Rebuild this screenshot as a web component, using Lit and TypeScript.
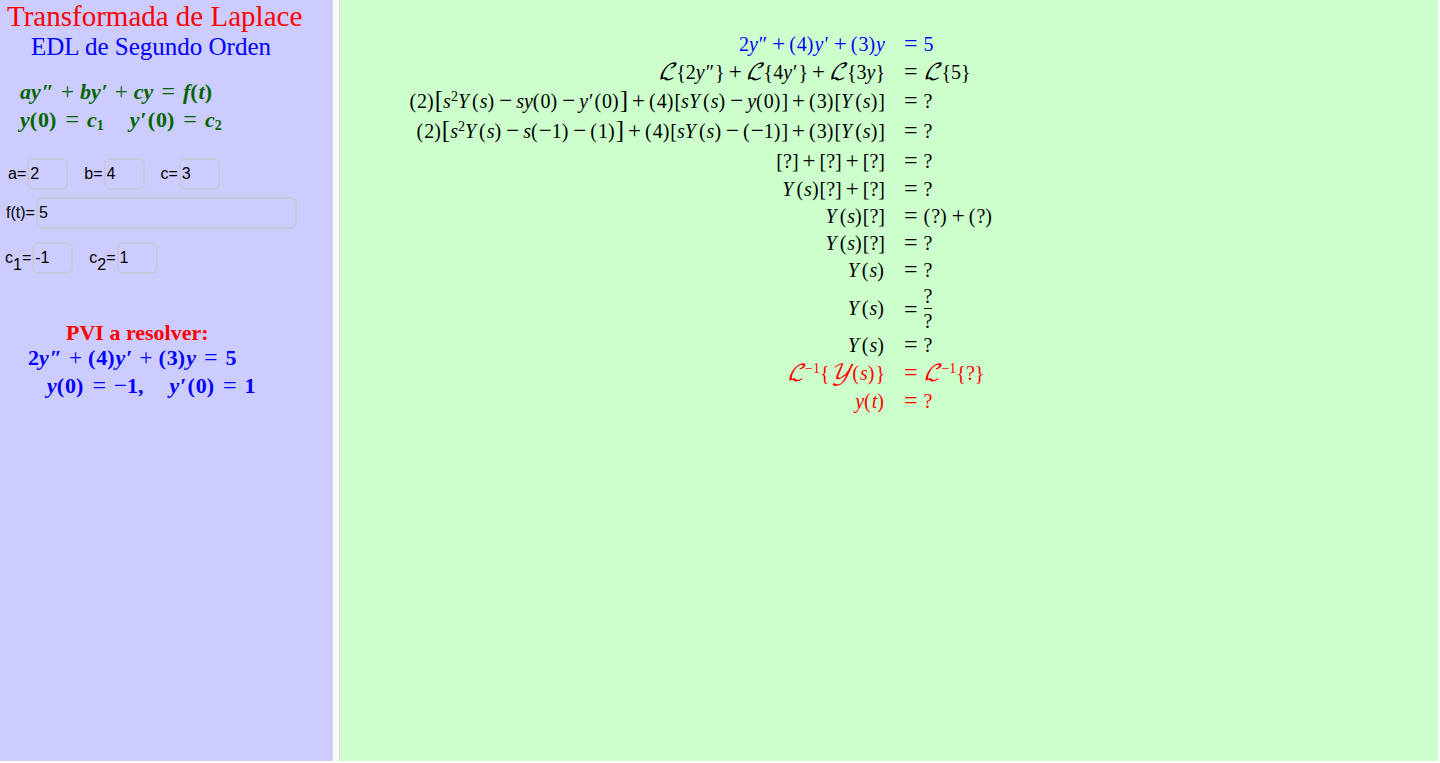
import { LitElement, html, css, nothing, TemplateResult } from "lit";
import { customElement, property } from "lit/decorators.js";

/**
 * <math-line> sets one line of mathematics from a compact source:
 *   letters are italic variables, @L and @Y are script capitals,
 *   exponents are written ^2 or ^{-1}, subscripts _1,
 *   ' and " are primes, ~ is a wide space, < > are tall brackets,
 *   and fractions are written #a/b#.
 */
@customElement("math-line")
export class MathLine extends LitElement {
  @property() src = "";

  static styles = css`
    :host {
      display: inline-flex;
      align-items: baseline;
      white-space: nowrap;
    }
    .var {
      font-style: italic;
    }
    .cap {
      font-style: italic;
      margin-right: 3px;
    }
    .script {
      font-family: "DejaVu Math TeX Gyre", "DejaVu Serif", "DejaVu Sans", serif;
      font-size: 22px;
      font-weight: normal;
      font-style: italic;
      line-height: 0;
      margin-right: 1px;
    }
    .paren {
      padding-right: 1px;
    }
    .tall {
      font-size: 25px;
      line-height: 0;
      font-weight: normal;
    }
    .op {
      font-size: 23px;
      line-height: 0;
      margin: 0 var(--op-space, 4px);
      font-weight: normal;
    }
    .rel {
      font-size: 24px;
      margin: 0 var(--rel-space, 6px);
    }
    .rel:first-child {
      margin-left: 0;
    }
    .rel:has(+ .frac) {
      align-self: center;
    }
    .unary {
      margin: 0;
    }
    .sup,
    .sub {
      font-size: 14px;
      line-height: 1;
      position: relative;
    }
    .sup {
      top: -7px;
    }
    .sub {
      top: 3px;
    }
    .prime {
      margin: 0 1px;
    }
    .quad {
      width: 26px;
    }
    .frac {
      display: inline-flex;
      flex-direction: column;
      align-self: center;
      text-align: center;
      line-height: 24px;
    }
    .frac .top {
      border-bottom: 1px solid currentColor;
    }
  `;

  private tokens(): TemplateResult[] {
    const parts =
      this.src.match(/#[^#]+#|@.|\^\{[^}]+\}|\^.|_.|[A-Za-z]|\d+|[^\s]/g) ?? [];
    let previous = "(";
    return parts.map((t) => {
      const before = previous;
      previous = t;
      if (t[0] === "#") {
        const [top, bottom] = t.slice(1, -1).split("/");
        return html`<span class="frac"><span class="top">${top}</span><span>${bottom}</span></span>`;
      }
      if (t === "@L") return html`<span class="script">ℒ</span>`;
      if (t === "@Y") return html`<span class="script">𝒴</span>`;
      if (t[0] === "^") {
        return html`<span class="sup">${t.slice(1).replace(/[{}]/g, "")}</span>`;
      }
      if (t[0] === "_") return html`<span class="sub">${t.slice(1)}</span>`;
      if (t === "=") return html`<span class="op rel">=</span>`;
      if (t === "+" || t === "−") {
        const unary = before === "(" || before === "=";
        return html`<span class="op ${unary ? "unary" : ""}">${t}</span>`;
      }
      if (t === "'") return html`<span class="prime">′</span>`;
      if (t === '"') return html`<span class="prime">″</span>`;
      if (t === "~") return html`<span class="quad"></span>`;
      if (t === "<") return html`<span class="tall">[</span>`;
      if (t === ">") return html`<span class="tall">]</span>`;
      if (/[A-Z]/.test(t)) return html`<span class="cap">${t}</span>`;
      if (/[a-z]/.test(t)) return html`<span class="var">${t}</span>`;
      if (/[()]/.test(t)) return html`<span class="paren">${t}</span>`;
      return html`<span>${t}</span>`;
    });
  }

  render() {
    return html`${this.tokens()}`;
  }
}

interface Step {
  left: string;
  right: string;
  kind?: string;
}

const STEPS: Step[] = [
  { left: `2y"+(4)y'+(3)y`, right: "=5", kind: "mid blue" },
  { left: `@L{2y"}+@L{4y'}+@L{3y}`, right: "=@L{5}", kind: "mid" },
  { left: "(2)<s^2Y(s)−sy(0)−y'(0)>+(4)[sY(s)−y(0)]+(3)[Y(s)]", right: "=?", kind: "high" },
  { left: "(2)<s^2Y(s)−s(−1)−(1)>+(4)[sY(s)−(−1)]+(3)[Y(s)]", right: "=?", kind: "high" },
  { left: "[?]+[?]+[?]", right: "=?", kind: "high" },
  { left: "Y(s)[?]+[?]", right: "=?" },
  { left: "Y(s)[?]", right: "=(?)+(?)" },
  { left: "Y(s)[?]", right: "=?" },
  { left: "Y(s)", right: "=?" },
  { left: "Y(s)", right: "=#?/?#", kind: "double" },
  { left: "Y(s)", right: "=?" },
  { left: "@L^{−1}{@Y(s)}", right: "=@L^{−1}{?}", kind: "mid red" },
  { left: "y(t)", right: "=?", kind: "mid red" },
];

@customElement("app-root")
export class AppRoot extends LitElement {
  static styles = css`
    :host {
      display: block;
      background: #fff;
      color: #000;
      font-family: "Liberation Serif", serif;
      font-size: 20px;
    }
    .page {
      box-sizing: border-box;
      display: grid;
      grid-template-columns: 332px 8px 1fr;
      min-height: 100vh;
      padding: 0 2px 2px 0;
    }
    .side {
      background: #ccccff;
    }
    .divider {
      background: #f8f8f8;
      border: solid #d8d8d8;
      border-width: 0 1px;
    }
    .work {
      background: #ccffcc;
      padding: 30px 0 30px 65px;
    }
    h1,
    h2,
    h3 {
      margin: 0;
      font-weight: normal;
      white-space: nowrap;
    }
    h1 {
      padding: 0 7px;
      font-size: 29px;
      line-height: 32px;
      color: #ff0000;
    }
    h2 {
      padding-left: 31px;
      font-size: 25px;
      line-height: 30px;
      color: #0000ff;
    }
    h3 {
      padding-left: 66px;
      font-size: 22px;
      line-height: 22px;
      font-weight: bold;
      color: #ff0000;
    }
    .general,
    .problem {
      --op-space: 6px;
      --rel-space: 8px;
      display: flex;
      flex-direction: column;
      font-size: 22px;
      font-weight: bold;
      line-height: 28px;
    }
    .general {
      padding: 16px 20px 0;
      color: #006400;
    }
    .problem {
      padding-left: 28px;
      color: #0000ff;
    }
    .conditions {
      padding-left: 19px;
    }
    form {
      display: flex;
      flex-direction: column;
      padding: 24px 0 48px;
      font-family: "Liberation Sans", sans-serif;
      font-size: 16px;
    }
    .fields {
      display: flex;
      padding-left: 8px;
      margin-bottom: 7px;
    }
    .wide {
      padding-left: 6px;
      margin-bottom: 13px;
    }
    .initial {
      padding-left: 5px;
      margin-bottom: 0;
    }
    .field {
      display: flex;
      align-items: center;
      margin-right: 16px;
    }
    .field label {
      padding-right: 1px;
    }
    .field sub {
      font-size: 16px;
      line-height: 0;
      vertical-align: -7px;
    }
    input {
      box-sizing: border-box;
      width: 41px;
      height: 32px;
      padding: 0 1px;
      border: 2px solid #c8c8dc;
      border-radius: 6px;
      background: transparent;
      color: #000;
      font: inherit;
    }
    .wide input {
      width: 261px;
    }
    .step {
      display: grid;
      grid-template-columns: 480px auto;
      column-gap: 19px;
      align-items: center;
      height: 27px;
    }
    .left {
      display: flex;
      justify-content: flex-end;
    }
    .mid {
      height: 28px;
    }
    .high {
      height: 30px;
    }
    .double {
      height: 48px;
    }
    .blue {
      color: #0000ff;
    }
    .red {
      color: #ff0000;
    }
  `;

  private field(id: string, name: string, value: string, sub = "") {
    return html`<div class="field">
      <label for=${id}>${name}${sub ? html`<sub>${sub}</sub>` : nothing}=</label>
      <input id=${id} type="text" .value=${value} />
    </div>`;
  }

  render() {
    return html`
      <div class="page">
        <aside class="side">
          <h1>Transformada de Laplace</h1>
          <h2>EDL de Segundo Orden</h2>
          <div class="general">
            <math-line src=${`ay"+by'+cy=f(t)`}></math-line>
            <math-line src="y(0)=c_1~y'(0)=c_2"></math-line>
          </div>
          <form>
            <div class="fields">
              ${this.field("a", "a", "2")} ${this.field("b", "b", "4")}
              ${this.field("c", "c", "3")}
            </div>
            <div class="fields wide">${this.field("f", "f(t)", "5")}</div>
            <div class="fields initial">
              ${this.field("c1", "c", "-1", "1")} ${this.field("c2", "c", "1", "2")}
            </div>
          </form>
          <h3>PVI a resolver:</h3>
          <div class="problem">
            <math-line src=${`2y"+(4)y'+(3)y=5`}></math-line>
            <math-line class="conditions" src="y(0)=−1,~y'(0)=1"></math-line>
          </div>
        </aside>
        <div class="divider"></div>
        <main class="work">
          ${STEPS.map(
            (s) => html`<div class="step ${s.kind ?? ""}">
              <div class="left"><math-line src=${s.left}></math-line></div>
              <math-line src=${s.right}></math-line>
            </div>`
          )}
        </main>
      </div>
    `;
  }
}
